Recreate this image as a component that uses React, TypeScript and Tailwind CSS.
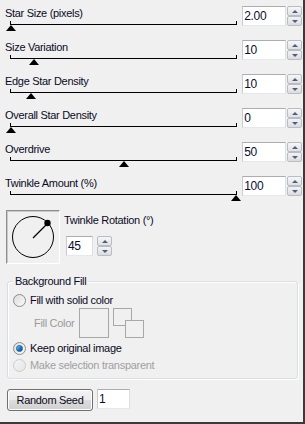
import React from "react";

const FONT = { fontFamily: '"Liberation Sans", Arial, sans-serif' };

function Spin() {
  return (
    <div className="flex flex-col w-[15px] h-[20px] gap-0">
      <div className="h-[10px] border border-[#b8bcc4] rounded-[2px] bg-gradient-to-b from-[#f7f7f7] to-[#e1e1e1] flex items-center justify-center">
        <div className="w-0 h-0 border-l-[3px] border-r-[3px] border-b-[3px] border-l-transparent border-r-transparent border-b-[#4a5d86]" />
      </div>
      <div className="h-[10px] border border-[#b8bcc4] rounded-[2px] bg-gradient-to-b from-[#f3f3f3] to-[#dcdcdc] flex items-center justify-center">
        <div className="w-0 h-0 border-l-[3px] border-r-[3px] border-t-[3px] border-l-transparent border-r-transparent border-t-[#4a5d86]" />
      </div>
    </div>
  );
}

function TextBox({ value, w }: { value: string; w: string }) {
  return (
    <div
      className={`${w} h-[20px] bg-white border border-t-[#abadb3] border-l-[#c9cbd2] border-r-[#dbdfe6] border-b-[#e3e9ef] flex items-center pl-[1px] text-[12px] tracking-[-0.3px] text-[#0c0c30]`}
    >
      {value}
    </div>
  );
}

function SliderRow({ label, value, pos }: { label: string; value: string; pos: number }) {
  const left = 11 + (225 * pos) / 100 - 5;
  return (
    <div className="flex h-[34px]">
      <div className="relative w-[243px]">
        <div className="pl-[5px] h-[14px] leading-[14px] text-[11px] text-[#0a0a24] tracking-[-0.3px]">{label}</div>
        <div className="ml-[10px] mt-[1px] w-[227px] h-[4px] border-l border-r border-b border-black" />
        <div
          className="absolute top-[19px] w-0 h-0 border-l-[5px] border-r-[5px] border-b-[6px] border-l-transparent border-r-transparent border-b-black"
          style={{ left: `${left}px` }}
        />
      </div>
      <TextBox value={value} w="w-[44px]" />
      <div className="ml-[1px]">
        <Spin />
      </div>
    </div>
  );
}

function Radio({ checked, disabled }: { checked?: boolean; disabled?: boolean }) {
  return (
    <div
      className={`w-[13px] h-[13px] rounded-full border flex items-center justify-center ${
        disabled
          ? "border-[#cdcdcd] bg-gradient-to-br from-[#f4f4f4] to-[#e6e6e6]"
          : "border-[#8a8d92] bg-gradient-to-br from-[#dcdcdc] to-[#fafafa]"
      }`}
    >
      {checked && (
        <div className="w-[7px] h-[7px] rounded-full bg-gradient-to-br from-[#8fd3f5] via-[#1c7ac4] to-[#0d4f92] border border-[#1a5c9a]" />
      )}
    </div>
  );
}

export default function App() {
  return (
    <div
      className="w-[305px] h-[424px] bg-[#f0f0f0] border-r-2 border-b-2 border-r-[#3a3a3a] border-b-[#3a3a3a] text-[11px] text-[#0a0a24]"
      style={FONT}
    >
      <div className="pt-[6px] pr-[1px]">
        <SliderRow label="Star Size (pixels)" value="2.00" pos={0} />
        <SliderRow label="Size Variation" value="10" pos={10} />
        <SliderRow label="Edge Star Density" value="10" pos={9} />
        <SliderRow label="Overall Star Density" value="0" pos={0} />
        <SliderRow label="Overdrive" value="50" pos={50} />
        <SliderRow label="Twinkle Amount (%)" value="100" pos={100} />
      </div>

      <div className="flex ml-[6px]">
        <div className="w-[54px] h-[54px] border border-t-[#8f8f8f] border-l-[#8f8f8f] border-b-white border-r-white bg-[#f0f0f0] shadow-[inset_1px_1px_0_#c8c8c8]">
          <svg width="52" height="52" viewBox="0 0 52 52">
            <circle cx="26" cy="26" r="20.5" fill="none" stroke="#000" strokeWidth="1" />
            <line x1="26" y1="27" x2="40.5" y2="12.5" stroke="#000" strokeWidth="1.2" />
            <circle cx="40.5" cy="12" r="3.2" fill="#000" />
          </svg>
        </div>
        <div className="ml-[4px] pt-[3px]">
          <div className="h-[14px] leading-[14px] tracking-[-0.3px]">Twinkle Rotation (°)</div>
          <div className="flex mt-[9px] ml-[2px] gap-[4px]">
            <TextBox value="45" w="w-[27px]" />
            <Spin />
          </div>
        </div>
      </div>

      <div className="relative ml-[7px] mt-[17px] mr-[5px] h-[98px] border border-[#d5dfe5] rounded-[3px] shadow-[inset_1px_1px_0_#ffffff,1px_1px_0_#ffffff]">
        <div className="absolute left-[5px] top-[-8px] px-[2px] bg-[#f0f0f0] h-[14px] leading-[14px] tracking-[-0.3px]">
          Background Fill
        </div>
        <div className="pt-[12px] pl-[5px]">
          <div className="flex items-center h-[13px] gap-[4px]">
            <Radio />
            <span className="tracking-[-0.3px]">Fill with solid color</span>
          </div>
          <div className="flex items-center mt-[1px] h-[30px]">
            <span className="ml-[21px] w-[45px] text-[#9a9a9a] tracking-[-0.3px]">Fill Color</span>
            <div className="w-[30px] h-[30px] border border-[#a8a8a8]" />
            <div className="relative ml-[4px] w-[31px] h-[30px]">
              <div className="absolute left-0 top-0 w-[19px] h-[18px] border border-[#a8a8a8]" />
              <div className="absolute left-[12px] top-[12px] w-[19px] h-[18px] border border-[#a8a8a8] bg-[#f0f0f0]" />
            </div>
          </div>
          <div className="flex items-center mt-[4px] h-[13px] gap-[4px]">
            <Radio checked />
            <span className="tracking-[-0.3px]">Keep original image</span>
          </div>
          <div className="flex items-center mt-[4px] h-[13px] gap-[4px]">
            <Radio disabled />
            <span className="tracking-[-0.3px] text-[#a0a0a0]">Make selection transparent</span>
          </div>
        </div>
      </div>

      <div className="flex ml-[7px] mt-[10px] gap-[4px]">
        <div className="w-[86px] h-[22px] rounded-[3px] border border-[#707070] bg-[linear-gradient(to_bottom,#f2f2f2_0%,#ebebeb_50%,#dddddd_51%,#cfcfcf_100%)] flex items-center justify-center text-[11px] tracking-[-0.3px] text-[#0a0a20] shadow-[inset_0_0_0_1px_#fcfcfc]">
          Random Seed
        </div>
        <TextBox value="1" w="w-[33px]" />
      </div>
    </div>
  );
}
